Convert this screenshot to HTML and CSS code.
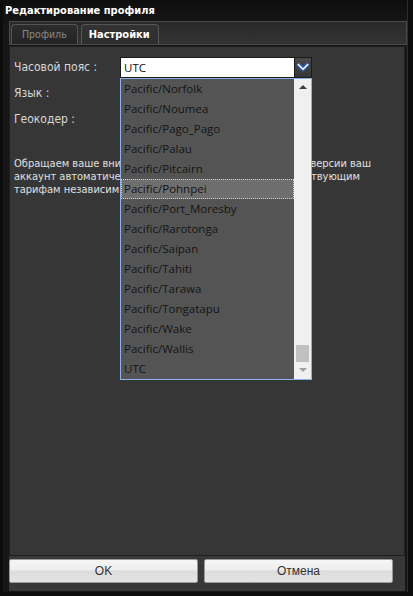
FILE: index.html
```html
<!DOCTYPE html>
<html lang="ru">
<head>
<meta charset="utf-8">
<title>Редактирование профиля</title>
<link rel="stylesheet" href="styles.css">
</head>
<body>
<div class="dialog">
  <div class="title">Редактирование профиля</div>
  <div class="tabbar">
    <div class="tab">Профиль</div>
    <div class="tab active">Настройки</div>
  </div>
  <div class="panel">
    <div class="row">
      <div class="label">Часовой пояс :</div>
      <div class="select">
        <div class="select-value">UTC</div>
        <div class="select-btn">
          <svg width="14" height="10" viewBox="0 0 14 10"><polyline points="1.8,2 7,7.2 12.2,2" fill="none" stroke="#2f5fb8" stroke-width="4" stroke-linejoin="miter"/><polyline points="1.8,2 7,7.2 12.2,2" fill="none" stroke="#ffffff" stroke-width="1.4"/></svg>
        </div>
        <div class="dropdown">
          <ul class="options">
            <li>Pacific/Norfolk</li>
            <li>Pacific/Noumea</li>
            <li>Pacific/Pago_Pago</li>
            <li>Pacific/Palau</li>
            <li>Pacific/Pitcairn</li>
            <li class="hover">Pacific/Pohnpei</li>
            <li>Pacific/Port_Moresby</li>
            <li>Pacific/Rarotonga</li>
            <li>Pacific/Saipan</li>
            <li>Pacific/Tahiti</li>
            <li>Pacific/Tarawa</li>
            <li>Pacific/Tongatapu</li>
            <li>Pacific/Wake</li>
            <li>Pacific/Wallis</li>
            <li>UTC</li>
          </ul>
          <div class="scrollbar">
            <div class="arrow up"></div>
            <div class="track"><div class="thumb"></div></div>
            <div class="arrow down"></div>
          </div>
        </div>
      </div>
    </div>
    <div class="row"><div class="label">Язык :</div></div>
    <div class="row"><div class="label">Геокодер :</div></div>
    <p class="note">Обращаем ваше вни<span class="covered">мание, что по окончании срока про</span> версии ваш<br>аккаунт автоматичес<span class="covered">ки будет переведен на план, соо</span>тствующим<br>тарифам независим<span class="covered">о от выбранного ранее пакета.</span></p>
  </div>
  <div class="footer">
    <button class="btn">OK</button>
    <button class="btn">Отмена</button>
  </div>
</div>
</body>
</html>
```
FILE: styles.css
```css
html, body {
  margin: 0;
  padding: 0;
  background: #0c0c0c;
  width: 413px;
  height: 596px;
  overflow: hidden;
}
.dialog {
  margin-left: 3px;
  width: 405px;
  height: 592px;
  box-sizing: border-box;
  border-right: 1px solid #2c2c2c;
  background: #161616;
  display: flex;
  flex-direction: column;
  font-family: "DejaVu Sans Condensed", "DejaVu Sans", sans-serif;
}
.title {
  height: 21px;
  line-height: 21px;
  padding-left: 2px;
  color: #ffffff;
  font-weight: bold;
  font-size: 11px;
  background: linear-gradient(#0e0e0e, #151515);
}
.tabbar {
  margin-left: 6px;
  height: 24px;
  box-sizing: border-box;
  border: 1px solid #4a4a4a;
  background: linear-gradient(#2a2a2a, #333333);
  display: flex;
  align-items: flex-end;
  padding-left: 1px;
  gap: 3px;
}
.tab {
  height: 19px;
  line-height: 19px;
  padding: 0 10px;
  border: 1px solid #555;
  border-bottom: none;
  border-radius: 4px 4px 0 0;
  background: linear-gradient(#2c2c2c, #242424);
  color: #8a8a8a;
  font-size: 10.5px;
}
.tab.active {
  padding: 0 8px 0 7px;
  color: #ffffff;
  font-weight: bold;
  font-size: 11px;
  background: linear-gradient(#333, #2d2d2d);
}
.panel {
  margin-top: 1px;
  margin-left: 6px;
  width: 396px;
  height: 510px;
  background: #363636;
  border: 1px solid #1e1e1e;
  box-sizing: border-box;
  padding: 7px 0 0 4px;
}
.row {
  display: flex;
  align-items: center;
  height: 26px;
}
.label {
  width: 106px;
  color: #d8d8d8;
  font-size: 12px;
}
.select {
  position: relative;
  display: flex;
  height: 21px;
}
.select-value {
  width: 175px;
  height: 21px;
  box-sizing: border-box;
  background: #fff;
  border: 1px solid #1a1a1a;
  font-family: "Open Sans", sans-serif;
  font-size: 11.5px;
  color: #111;
  line-height: 19px;
  padding-left: 3px;
}
.select-btn {
  width: 17px;
  height: 21px;
  box-sizing: border-box;
  border: 1px solid #1a1a1a;
  border-left: none;
  background: linear-gradient(#4a4a4a, #363636);
  display: flex;
  align-items: center;
  justify-content: center;
}
.dropdown {
  position: absolute;
  left: 0;
  top: 21px;
  width: 192px;
  height: 302px;
  box-sizing: border-box;
  border: 1px solid #8fb1ea;
  background: #545454;
  display: flex;
}
.options {
  list-style: none;
  margin: 0;
  padding: 0;
  flex: 1;
}
.options li {
  height: 20px;
  line-height: 20px;
  padding-left: 3px;
  font-family: "Open Sans", sans-serif;
  font-size: 11.5px;
  color: #141414;
  box-sizing: border-box;
}
.options li.hover {
  background: #6e6e6e;
  border: 1px dotted #d0d0d0;
  line-height: 18px;
  padding-left: 2px;
}
.scrollbar {
  width: 17px;
  background: #f0f0f0;
  display: flex;
  flex-direction: column;
}
.arrow {
  height: 17px;
  display: flex;
  align-items: center;
  justify-content: center;
}
.arrow::after {
  content: "";
  width: 0;
  height: 0;
  border-left: 4px solid transparent;
  border-right: 4px solid transparent;
}
.arrow.up::after { border-bottom: 4px solid #404040; }
.arrow.down::after { border-top: 4px solid #a0a0a0; }
.track {
  flex: 1;
  display: flex;
  flex-direction: column;
  justify-content: flex-end;
  padding: 0 2px 0 2px;
}
.thumb {
  height: 17px;
  background: #c0c0c0;
}
.note {
  margin: 25px 0 0 0;
  color: #e0e0e0;
  font-size: 11px;
  line-height: 13px;
  white-space: nowrap;
}
.covered {
  visibility: hidden;
}
.footer {
  margin-left: 6px;
  width: 396px;
  display: flex;
  gap: 6px;
  padding-top: 3px;
  box-sizing: border-box;
  background: #383838;
  height: 35px;
}
.btn {
  width: 189px;
  height: 24px;
  border: 1px solid #9a9a9a;
  border-radius: 2px;
  background: linear-gradient(#f6f6f6 0%, #eeeeee 45%, #dcdcdc 50%, #e4e4e4 100%);
  font-family: "Liberation Sans", Arial, sans-serif;
  font-size: 12px;
  color: #333;
  padding: 0;
}
```
